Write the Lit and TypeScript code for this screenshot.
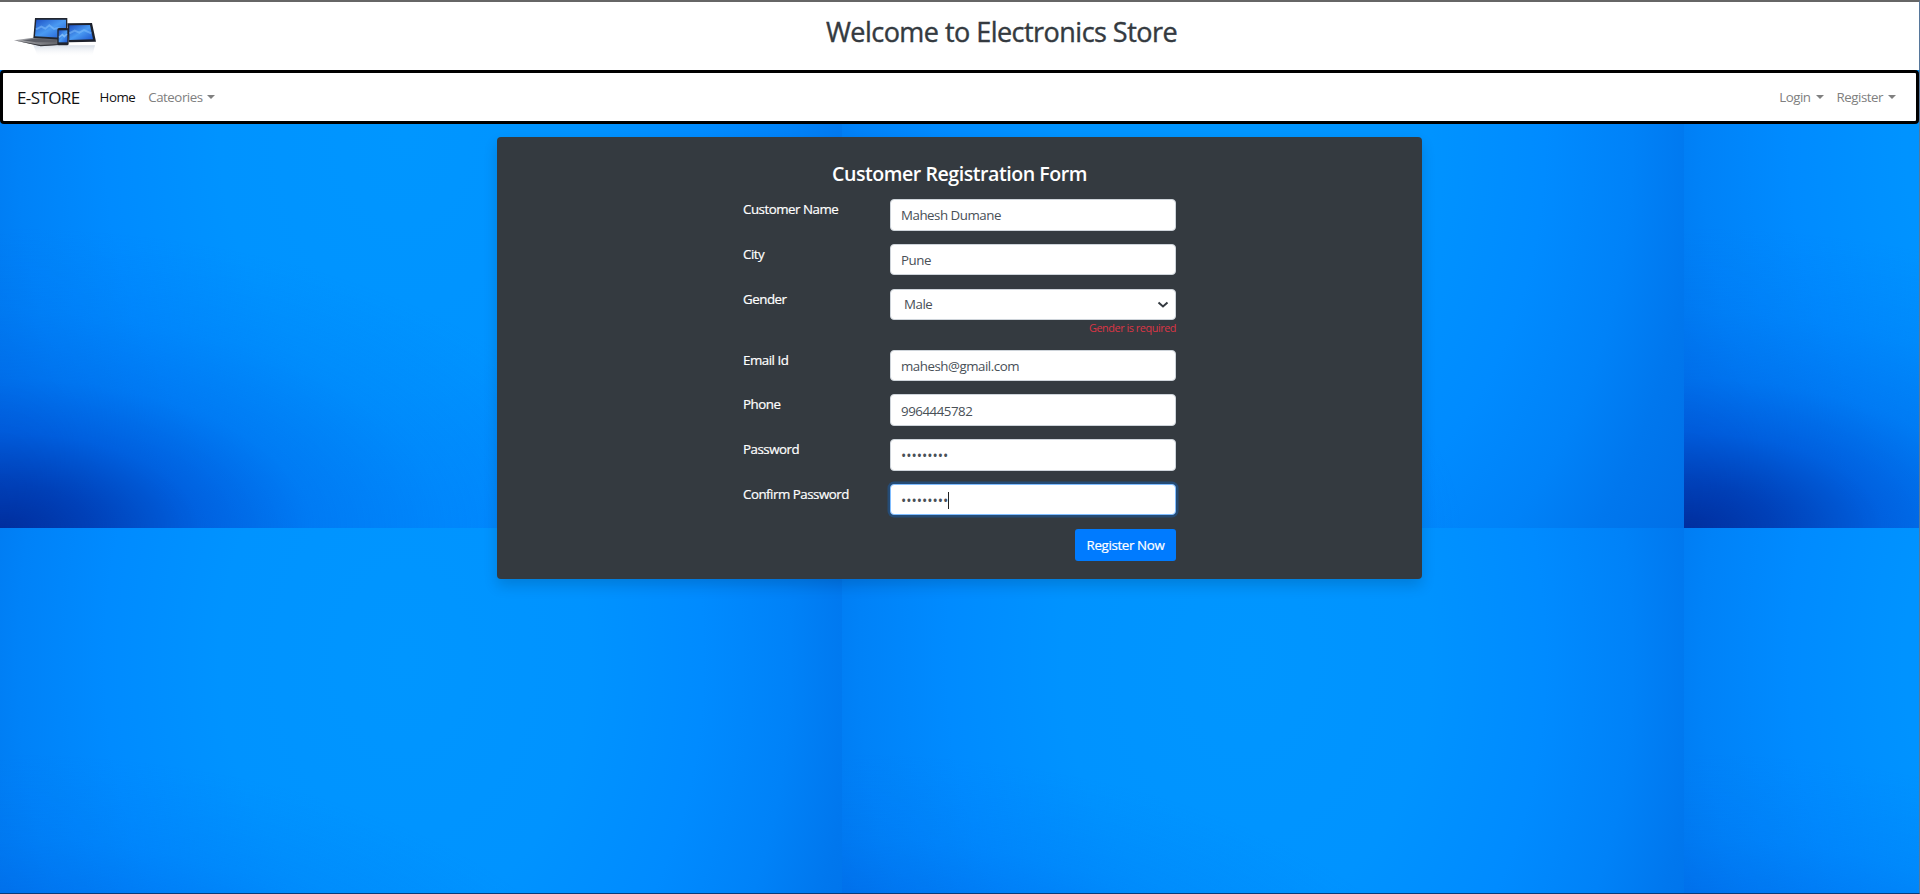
import { LitElement, html, css } from "lit";
import { customElement } from "lit/decorators.js";

interface Field { label: string; value: string; kind?: "select" | "secret"; error?: string; focused?: boolean; }

const FIELDS: Field[] = [
  { label: "Customer Name", value: "Mahesh Dumane" },
  { label: "City", value: "Pune" },
  { label: "Gender", value: "Male", kind: "select", error: "Gender is required" },
  { label: "Email Id", value: "mahesh@gmail.com" },
  { label: "Phone", value: "9964445782" },
  { label: "Password", value: "•••••••••", kind: "secret" },
  { label: "Confirm Password", value: "•••••••••", kind: "secret", focused: true },
];

@customElement("app-root")
class AppRoot extends LitElement {
  static styles = css`
    * { box-sizing: border-box; }
    :host {
      box-sizing: border-box; display: flex; flex-direction: column; width: 100%; height: 894px; overflow: hidden;
      font: 13.3px/21px "Open Sans", "Noto Sans", sans-serif; letter-spacing: -.47px; color: #212529;
      border-top: 2px solid #666; border-right: 1px solid #57779b; border-bottom: 1px solid #0b3a78;
      background-color: #008cff;
      background-image:
        radial-gradient(ellipse 620px 300px at 0 100%, #002e9e 0%, rgba(0,52,172,.82) 15%, rgba(0,72,205,.6) 32%, rgba(0,92,224,.36) 50%, rgba(0,108,236,.18) 72%, rgba(0,120,245,0) 100%),
        radial-gradient(ellipse 460px 640px at 48% 25%, #0096ff 0%, #0093ff 40%, #008bff 65%, #0082f8 84%, #0077ee 98%, #006ae2 125%);
      background-size: 842px 526px;
    }
    .masthead { height: 68px; background: #fff; display: grid; grid-template-columns: 92px 1fr; padding-left: 10px; }
    .logo { width: 92px; height: 50px; margin-top: 8px; }
    .title { margin: 12px 18px 0 0; font-size: 27px; line-height: 36px; font-weight: 500; letter-spacing: -.53px; color: #343a40; text-align: center; -webkit-text-stroke: .4px #343a40; }
    .navbar { height: 54px; background: #fff; border: 3px solid #000; border-radius: 4px; display: flex; align-items: center; padding: 0 20px 0 14px; }
    .brand { font-size: 17px; letter-spacing: -.6px; color: #111; margin-right: 20px; }
    .links { display: flex; gap: 13px; color: #808080; }
    .links.right { margin-left: auto; }
    .active { color: #111; }
    .item { display: flex; align-items: center; gap: 4px; white-space: nowrap; }
    .right .item { gap: 5px; }
    .caret { border: 4px solid transparent; border-top-color: currentColor; border-bottom: 0; }
    .card { width: 925px; height: 442px; margin: 13px 0 0 497px; background: #343a40; border-radius: 4px; box-shadow: 0 7px 14px rgba(0,0,0,.15); color: #fff; padding-top: 23px; }
    .heading { margin: 0 0 12px; font-size: 19.6px; line-height: 27px; font-weight: 600; text-align: center; }
    .form { width: 433px; margin-left: 246px; }
    .row { display: grid; grid-template-columns: 147px 286px; height: 44.75px; }
    .row.tall { height: 61px; }
    .label { -webkit-text-stroke: .2px #fff; }
    .control { height: 31.5px; background: #fff; border: 1px solid #ced4da; border-radius: 4px; color: #495057; padding: 2px 10px 0; display: flex; align-items: center; }
    .control.secret { font-size: 14px; letter-spacing: 0; }
    .control.select { padding: 1px 6px 0 13px; justify-content: space-between; }
    .control.focused { border-color: #80bdff; box-shadow: 0 0 0 2.5px rgba(0,123,255,.28); }
    .caret-bar { width: 1px; height: 17px; background: #222; }
    .error { color: #dc3545; font-size: 10.9px; line-height: 15px; text-align: right; }
    .actions { display: flex; justify-content: flex-end; }
    .button { font: inherit; letter-spacing: -.35px; height: 32px; width: 101px; padding: 1px 0 0; border: 0; border-radius: 3px; background: #007bff; color: #fff; white-space: nowrap; -webkit-text-stroke: .2px #fff; }
  `;

  private logo() {
    return html`<svg class="logo" viewBox="0 0 276 150">
      <defs>
        <linearGradient id="screen" x1="0" y1="0" x2="1" y2="1"><stop offset="0" stop-color="#1c50c4"/><stop offset=".5" stop-color="#4a9af2"/><stop offset="1" stop-color="#1e58d0"/></linearGradient>
        <linearGradient id="fade" x1="0" y1="0" x2="0" y2="1"><stop offset="0" stop-color="#b8c4d6" stop-opacity=".55"/><stop offset="1" stop-color="#fff" stop-opacity="0"/></linearGradient>
        <linearGradient id="deck" x1="0" y1="0" x2="1" y2="0"><stop offset="0" stop-color="#a8a8ac"/><stop offset="1" stop-color="#55585f"/></linearGradient>
      </defs>
      <path d="M70 106H255L246 140H84Z" fill="url(#fade)"/>
      <path d="M12 91 70 83 172 86 150 104 92 108Z" fill="url(#deck)"/>
      <path d="M38 91 74 86 142 89 136 97 78 97Z" fill="#5c5e66"/>
      <path d="M12 91 92 105 150 102V105L92 109Z" fill="#34363c"/>
      <path d="M75 24H172V90L70 84Z" fill="#22262f"/>
      <path d="M79 29H168V84L75 79Z" fill="url(#screen)"/>
      <path d="M78 58 94 50 106 56 118 46 132 57 144 54 166 62" fill="none" stroke="#8cc8ff" stroke-width="6" opacity=".5"/>
      <path d="M172 40 246 39 258 95 176 97Z" fill="#1d212c"/>
      <path d="M178 46 240 45 249 88 178 90Z" fill="url(#screen)"/>
      <path d="M178 70 194 62 208 68 222 60 244 70" fill="none" stroke="#8cc8ff" stroke-width="6" opacity=".45"/>
      <rect x="142" y="54" width="34" height="52" rx="5" fill="#20242e"/>
      <rect x="146" y="61" width="26" height="36" fill="url(#screen)"/>
      <path d="M147 82 157 74 163 80 171 72" fill="none" stroke="#a4d6ff" stroke-width="5" opacity=".6"/>
    </svg>`;
  }

  private link(text: string) {
    return html`<span class="item"><span>${text}</span><span class="caret"></span></span>`;
  }

  private control(f: Field) {
    return html`<div class="control ${f.kind ?? ""} ${f.focused ? "focused" : ""}">
      <span>${f.value}</span>${f.focused ? html`<span class="caret-bar"></span>` : ""}
      ${f.kind === "select" ? html`<svg width="12" height="8" viewBox="0 0 12 8"><path d="M1.5 1.5 6 5.5 10.5 1.5" fill="none" stroke="#343a40" stroke-width="2"/></svg>` : ""}
    </div>`;
  }

  render() {
    return html`
      <header class="masthead">${this.logo()}<h1 class="title">Welcome to Electronics Store</h1></header>
      <nav class="navbar"><span class="brand">E-STORE</span>
        <div class="links"><span class="active">Home</span>${this.link("Cateories")}</div>
        <div class="links right">${this.link("Login")}${this.link("Register")}</div></nav>
      <main class="card"><h2 class="heading">Customer Registration Form</h2>
        <div class="form">${FIELDS.map(f => html`<div class="row ${f.error ? "tall" : ""}"><span class="label">${f.label}</span>
          <div>${this.control(f)}${f.error ? html`<div class="error">${f.error}</div>` : ""}</div></div>`)}
          <div class="actions"><button class="button">Register Now</button></div></div></main>`;
  }
}
